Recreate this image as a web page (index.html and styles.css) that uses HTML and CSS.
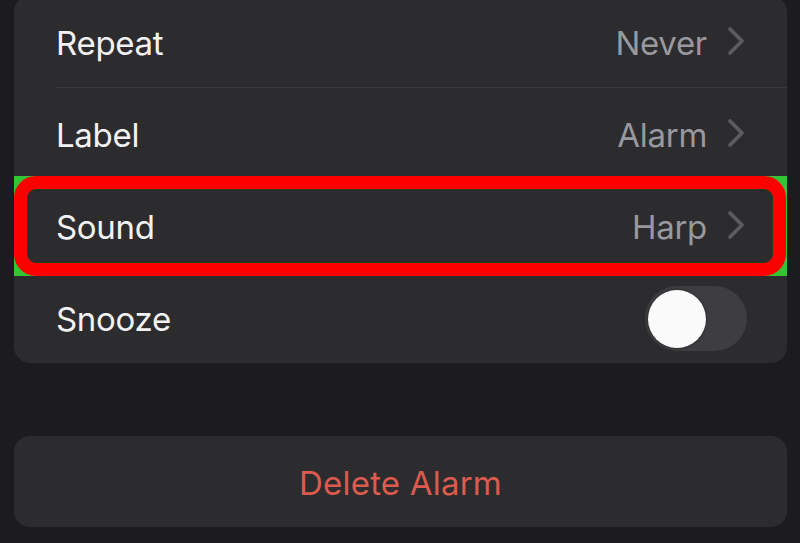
FILE: index.html
```html
<!DOCTYPE html>
<html>
<head>
<meta charset="utf-8">
<link rel="stylesheet" href="styles.css">
</head>
<body>
<div class="page">
  <div class="card">
    <div class="row">
      <span class="label">Repeat</span>
      <span class="value">Never <svg class="chev" viewBox="0 0 18 30"><path d="M3 3 L15 15 L3 27"/></svg></span>
    </div>
    <div class="row">
      <span class="label">Label</span>
      <span class="value">Alarm <svg class="chev" viewBox="0 0 18 30"><path d="M3 3 L15 15 L3 27"/></svg></span>
    </div>
    <div class="row highlight">
      <span class="label">Sound</span>
      <span class="value">Harp <svg class="chev" viewBox="0 0 18 30"><path d="M3 3 L15 15 L3 27"/></svg></span>
    </div>
    <div class="row last">
      <span class="label">Snooze</span>
      <span class="toggle"><span class="knob"></span></span>
    </div>
  </div>
  <div class="delete">Delete Alarm</div>
</div>
</body>
</html>
```
FILE: styles.css
```css
html, body {
  margin: 0;
  padding: 0;
  background: #1c1c1e;
  height: 100%;
  overflow: hidden;
}
.page {
  padding: 0 13px 0 14px;
  font-family: Inter, "Liberation Sans", sans-serif;
}
.card {
  margin-top: -4px;
  background: #2c2c2e;
  border-radius: 16px;
}
.row {
  position: relative;
  height: 92px;
  display: flex;
  align-items: center;
  justify-content: space-between;
  padding: 0 42px 0 42px;
  box-sizing: border-box;
}
.row.last { height: 91px; }
.row:first-child::after {
  content: "";
  position: absolute;
  left: 41px;
  right: 0;
  bottom: 0;
  height: 1px;
  background: #3a3a3c;
}
.label {
  position: relative;
  z-index: 1;
  color: #f2f2f4;
  font-size: 33px;
  letter-spacing: -0.3px;
  margin-top: 2px;
}
.value {
  position: relative;
  z-index: 1;
  display: flex;
  align-items: center;
  color: #98989e;
  font-size: 33px;
  letter-spacing: -0.3px;
  margin-top: 2px;
}
.chev {
  width: 18px;
  height: 30px;
  margin-left: 20px;
  margin-top: -4px;
}
.chev path {
  fill: none;
  stroke: #5c5c60;
  stroke-width: 3.8;
  stroke-linecap: round;
  stroke-linejoin: round;
}
.highlight::before {
  content: "";
  position: absolute;
  left: 0;
  right: 0;
  top: -4px;
  bottom: -4px;
  background: #34c534;
}
.highlight::after {
  content: "";
  position: absolute;
  left: 0;
  right: 1px;
  top: -4px;
  bottom: -4px;
  border: 13px solid #ff0000;
  border-radius: 22px;
  background: #2c2c2e;
  box-shadow: inset 0 0 0 1px #1f3a1f;
}
.toggle {
  width: 102px;
  height: 65px;
  border-radius: 33px;
  background: #3e3e42;
  display: flex;
  align-items: center;
  padding-left: 3px;
  box-sizing: border-box;
  margin-right: -2px;
  margin-top: 2px;
}
.knob {
  width: 58px;
  height: 58px;
  border-radius: 50%;
  background: #fbfbfb;
  box-shadow: 0 0 3px rgba(0,0,0,0.5);
}
.delete {
  margin-top: 73px;
  height: 91px;
  background: #2c2c2e;
  border-radius: 16px;
  display: flex;
  align-items: center;
  justify-content: center;
  color: #dc5a4e;
  font-size: 33px;
  letter-spacing: 0.2px;
  padding-top: 2px;
  box-sizing: border-box;
}
```
